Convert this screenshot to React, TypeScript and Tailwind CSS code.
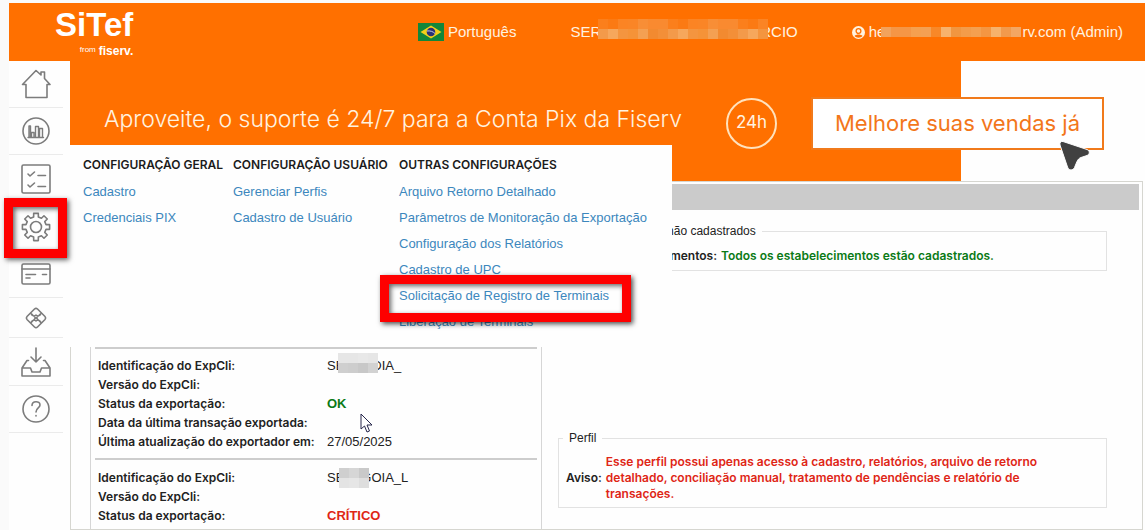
import React from "react";

type Tone = "ok" | "critical";

const ORANGE_LIGHT = ["#fb7f1c", "#f98a30", "#fa8526", "#fb7a14", "#f98a30", "#f88e36", "#fb8424"];
const ORANGE_DARK = ["#f4953f", "#f39a4a", "#f28a30", "#f59338", "#f6a75c", "#f38f38", "#f4a052"];

const HEADER_MOSAIC = [
    Array.from({ length: 17 }, (_, i) => ORANGE_LIGHT[(i * 3) % 7]),
    Array.from({ length: 17 }, (_, i) => ORANGE_DARK[(i * 3 + 1) % 7]),
];

const EMAIL_MOSAIC = [
    ["#f2a25c", "#f59646", "#f59646", "#f5a04f", "#f4a053", "#f88828", "#f7b26c", "#f19640", "#f39c4a", "#f4a050", "#f49642", "#f6b26c", "#f29a4c", "#f3a764"],
];

const menu = [
    { title: "CONFIGURAÇÃO GERAL", width: "w-[150px]", items: ["Cadastro", "Credenciais PIX"] },
    { title: "CONFIGURAÇÃO USUÁRIO", width: "w-[166px]", items: ["Gerenciar Perfis", "Cadastro de Usuário"] },
    {
        title: "OUTRAS CONFIGURAÇÕES",
        width: "flex-1",
        items: [
            "Arquivo Retorno Detalhado",
            "Parâmetros de Monitoração da Exportação",
            "Configuração dos Relatórios",
            "Cadastro de UPC",
            "Solicitação de Registro de Terminais",
            "Liberação de Terminais",
        ],
    },
];

const Mosaic = ({ rows, className = "" }: { rows: string[][]; className?: string }) => (
    <span className={`relative z-10 inline-flex flex-col ${className}`} aria-hidden="true">
        {rows.map((row, r) => (
            <span key={r} className="flex">
                {row.map((color, c) => (
                    <span key={c} className="size-[10px]" style={{ backgroundColor: color }} />
                ))}
            </span>
        ))}
    </span>
);

const Icon = ({ children }: { children: React.ReactNode }) => (
    <svg width="30" height="30" viewBox="0 0 30 30" fill="none" stroke="#7c7c7c" strokeWidth="1.6" strokeLinejoin="round" strokeLinecap="round">
        {children}
    </svg>
);

const HomeIcon = () => (
    <Icon>
        <path d="M5 15.500H1.500L15 1.500l5 4.500V3h3.500v6.500l5.500 6H26V28.500H5z" />
    </Icon>
);

const ChartIcon = () => (
    <Icon>
        <circle cx="15" cy="15" r="13" />
        <path d="M7 21.500h15.500M8 21V10h1.500v11M10.500 21v-4.500H13V21M14.500 21V10.500h3V21M18.500 21v-8.500h3V21" strokeWidth="1.400" />
    </Icon>
);

const ChecklistIcon = () => (
    <Icon>
        <rect x="1" y="1" width="28" height="28" rx="1.500" />
        <path d="M7 10l2 2 4.500-4M17 11.500h7.500M7 21l2 2 4.500-4M17 22.500h7.500" />
    </Icon>
);

const teeth = () => {
    // outline of an eight-tooth cog, two radii per tooth
    const pts: string[] = [];
    for (let i = 0; i < 8; i++) {
        const a = (i * Math.PI) / 4;
        [[-0.23, 10.3], [-0.17, 13.8], [0.17, 13.8], [0.23, 10.3]].forEach(([d, r]) => {
            pts.push(`${(15 + r * Math.sin(a + d)).toFixed(2)},${(15 - r * Math.cos(a + d)).toFixed(2)}`);
        });
    }
    return pts.join(" ");
};

const GearIcon = () => (
    <Icon>
        <polygon points={teeth()} />
        <circle cx="15" cy="15" r="5.500" />
    </Icon>
);

const CardIcon = () => (
    <Icon>
        <rect x="1" y="5" width="28" height="20" rx="1.500" />
        <path d="M1 10h28M5 15.500h9.500M5 19h4M21.500 15.500h4" />
    </Icon>
);

const PixIcon = () => (
    <Icon>
        <path d="M13.500 6q1.500-1.300 3 0l7.500 7.500q1.300 1.500 0 3L16.500 24q-1.500 1.300-3 0L6 16.500q-1.300-1.500 0-3z" />
        <path d="M9.500 10.500c2.500 0 3.500 4.500 5.500 4.500s3-4.500 5.500-4.500M9.500 19.500c2.500 0 3.500-4.500 5.500-4.500s3 4.500 5.500 4.500M10 10.500c1 3 3.500 3 5 1.500 1.500 1.500 4 1.500 5-1.500M10 19.500c1-3 3.500-3 5-1.500 1.500-1.500 4-1.500 5 1.500" strokeWidth="1.300" />
    </Icon>
);

const InboxIcon = () => (
    <Icon>
        <path d="M15 1v14M10 10l5 5 5-5" />
        <path d="M7.500 13.500H6L1 21v8h28v-8l-5-7.500h-1.500M1 21h8.500l1.500 4h8l1.500-4H29" />
    </Icon>
);

const HelpIcon = () => (
    <Icon>
        <circle cx="15" cy="15" r="13" />
        <path d="M11 11.500c0-5 8-5 8-.5 0 3-4 3-4 7M15 21.500v.500" />
    </Icon>
);

const sidebar = [
    { label: "Início", icon: <HomeIcon />, height: "h-[47px]" },
    { label: "Gráficos", icon: <ChartIcon />, height: "h-[47px]" },
    { label: "Relatórios", icon: <ChecklistIcon />, height: "h-[48px]" },
    { label: "Configurações", icon: <GearIcon />, height: "h-[48px]", marked: true },
    { label: "Cartões", icon: <CardIcon />, height: "h-[47px]" },
    { label: "Pix", icon: <PixIcon />, height: "h-[40px]" },
    { label: "Downloads", icon: <InboxIcon />, height: "h-[48px]" },
    { label: "Ajuda", icon: <HelpIcon />, height: "h-[47px]" },
];

const Flag = () => (
    <svg width="26" height="18" viewBox="0 0 26 18" className="mr-[4px]">
        <rect width="26" height="18" fill="#12863a" />
        <path d="M13 2.500L23.500 9 13 15.500 2.500 9z" fill="#f3cf1c" />
        <circle cx="13" cy="9" r="4.300" fill="#2c3175" />
        <path d="M9 8c3-.5 6 .5 8 2.500" stroke="#c5cbe6" fill="none" />
    </svg>
);

const Header = () => (
    <header className="flex h-[58px] items-start bg-[#ff7000] pr-[22px] pl-[46px] text-white">
        <div className="flex flex-col items-end pt-[5px]">
            <span className="text-[33px] leading-[33px] font-bold">SiTef</span>
            <span className="flex items-start gap-[3px] leading-[20px]">
                <span className="text-[8px] leading-[17px]">from</span>
                <span className="text-[12px] font-bold">fiserv.</span>
            </span>
        </div>
        <div className="flex flex-1 items-center justify-end gap-[54px] pt-[16px] text-[15px] leading-[20px] text-[#fff3e0]">
            <button type="button" className="flex items-center">
                <Flag />
                Português
            </button>
            <span className="flex items-center">
                SER
                <Mosaic rows={HEADER_MOSAIC} className="mr-[-8px] mb-[6px] ml-[-3px]" />
                RCIO
            </span>
            <button type="button" className="flex items-center">
                <svg width="13" height="13" viewBox="0 0 13 13" className="mr-[4px]">
                    <circle cx="6.500" cy="6.500" r="6.500" fill="#fff3e0" />
                    <circle cx="6.500" cy="5" r="2.400" fill="none" stroke="#ff7000" strokeWidth="1.300" />
                    <path d="M2.500 10c1.500-2 6.500-2 8 0-2 2.200-6 2.200-8 0z" fill="#ff7000" />
                </svg>
                he
                <Mosaic rows={EMAIL_MOSAIC} className="mr-px ml-[-4px]" />
                rv.com (Admin)
            </button>
        </div>
    </header>
);

const Sidebar = () => (
    <nav className="mr-[7px] w-[54px] shrink-0 bg-[#fefefe]">
        {sidebar.map((item) => (
            <div key={item.label} className={`relative border-b border-[#ebebeb] ${item.height}`}>
                <button type="button" aria-label={item.label} className="flex size-full items-center justify-center">
                    {item.icon}
                </button>
                {item.marked && (
                    <span className="pointer-events-none absolute -top-[5px] -left-[5px] z-20 h-[60px] w-[63px] border-[9px] border-[#fe0000] shadow-[2px_2px_5px_rgba(0,0,0,0.6),inset_2px_2px_5px_rgba(0,0,0,0.6)]" />
                )}
            </div>
        ))}
    </nav>
);

const Banner = () => (
    <section className="flex h-[120px] items-center gap-[34px] bg-[linear-gradient(to_right,#ff7000_82.9%,#fefefe_82.9%)] pt-[4px] pr-[41px] pl-[34px] font-['Inter','Liberation_Sans',sans-serif]">
        <p className="flex-1 pb-[8px] text-[23px] leading-[30px] font-light whitespace-nowrap text-[#fff3e0]">
            Aproveite, o suporte é 24/7 para a Conta Pix da Fiserv
        </p>
        <span className="flex size-[51px] shrink-0 items-center justify-center rounded-full border-2 border-[#ffe2bd] text-[17px] text-[#fff3e0]">
            24h
        </span>
        <a href="#vendas" className="relative flex h-[53px] w-[293px] shrink-0 items-center justify-center border-2 border-[#f17a1b] bg-white text-[22px] whitespace-nowrap text-[#f3761a]">
            Melhore suas vendas já
            <svg width="34" height="34" viewBox="0 0 34 34" className="absolute top-[40px] right-[10px]">
                <path d="M5 2.500l24 8c3 1 3 5 0 6l-6 2c-2 .7-3 2-4 4l-2.500 6c-1.500 3.500-6 3-7-.5L2 6C1.500 3.500 3 2 5 2.500z" fill="#414141" stroke="#fff" />
            </svg>
        </a>
    </section>
);

const SettingsMenu = () => (
    <div className="absolute top-[84px] left-0 z-10 flex w-[602px] bg-[#fefefe] pt-[6px] pb-[12px] pl-[13px]">
        {menu.map((col) => (
            <div key={col.title} className={col.width}>
                <h2 className="font-['Inter','Liberation_Sans',sans-serif] text-[12px] leading-[28px] font-semibold whitespace-nowrap text-[#1b1b1b]">{col.title}</h2>
                <ul className="text-[13px] leading-[26px] text-[#3c87bd]">
                    {col.items.map((item) => (
                        <li key={item} className="relative whitespace-nowrap">
                            <a href="#menu">{item}</a>
                            {item.startsWith("Solicitação") && (
                                <span className="pointer-events-none absolute -top-[8px] -left-[19px] z-10 h-[47px] w-[251px] border-[9px] border-[#fe0000] shadow-[2px_2px_5px_rgba(0,0,0,0.7),inset_2px_2px_5px_rgba(0,0,0,0.6)]" />
                            )}
                        </li>
                    ))}
                </ul>
            </div>
        ))}
    </div>
);

const Row = ({ label, children }: { label: string; children?: React.ReactNode }) => (
    <tr className="h-[19px]">
        <th scope="row" className="w-[229px] p-0 text-left font-['Inter','Liberation_Sans',sans-serif] text-[12px] font-semibold whitespace-nowrap">{label}</th>
        <td className="p-0">{children}</td>
    </tr>
);

const Status = ({ tone, children }: { tone: Tone; children: string }) => (
    <span className={tone === "ok" ? "font-bold text-[#0a7a16]" : "font-bold text-[#df2616]"}>{children}</span>
);

const Exports = () => (
    <div className="w-[452px] shrink-0 border-x border-[#d6d6d6] px-[4px] pt-[137px] text-[13px] leading-[19px] text-[#222]">
        <div className="border-t-2 border-[#cdcdcd] pt-[7px] pb-[7px] pl-[3px]">
            <table className="w-full border-collapse">
                <tbody>
                    <Row label="Identificação do ExpCli:">
                        <span className="flex h-[19px] items-center">
                            SE
                            <Mosaic rows={[["#e6e6e6", "#e6e6e6", "#e8e8e8", "#e6e6e6"], ["#cfcfcf", "#cdcdcd", "#c8c8c8", "#d2d2d2"]]} className="mr-[-6px] mb-[5px] ml-[-6px]" />
                            DIA_
                        </span>
                    </Row>
                    <Row label="Versão do ExpCli:" />
                    <Row label="Status da exportação:"><Status tone="ok">OK</Status></Row>
                    <Row label="Data da última transação exportada:" />
                    <Row label="Última atualização do exportador em:">27/05/2025</Row>
                </tbody>
            </table>
        </div>
        <div className="border-t-2 border-[#cdcdcd] pt-[8px] pl-[3px]">
            <table className="w-full border-collapse">
                <tbody>
                    <Row label="Identificação do ExpCli:">
                        <span className="flex h-[19px] items-center">
                            SE
                            <Mosaic rows={[["#cfcfcf", "#d6d6d6", "#c9c9c9"], ["#e4e4e4", "#e6e6e6", "#dedede"]]} className="mr-[-8px] ml-[-5px]" />
                            GOIA_L
                        </span>
                    </Row>
                    <Row label="Versão do ExpCli:" />
                    <Row label="Status da exportação:"><Status tone="critical">CRÍTICO</Status></Row>
                </tbody>
            </table>
        </div>
    </div>
);

const Notices = () => (
    <div className="flex-1 pt-[14px] pr-[32px] pl-[16px] font-['Inter','Liberation_Sans',sans-serif] text-[12px] text-[#222]">
        <fieldset className="border border-[#e2e2e2] px-[7px] pb-[5px]">
            <legend className="ml-[-3px] px-[6px] font-['Liberation_Sans',Arial,sans-serif] leading-[14px]">Estabelecimentos não cadastrados</legend>
            <div className="flex gap-[4px] pt-[9px] leading-[18px] font-semibold">
                <span className="flex w-[151px] justify-end whitespace-nowrap">Status estabelecimentos:</span>
                <span className="text-[#0a7a16]">Todos os estabelecimentos estão cadastrados.</span>
            </div>
        </fieldset>
        <fieldset className="mt-[160px] border border-[#e2e2e2] px-[7px] pb-[5px]">
            <legend className="ml-[-3px] px-[6px] font-['Liberation_Sans',Arial,sans-serif] leading-[14px]">Perfil</legend>
            <div className="flex items-center gap-[4px] pt-[9px] leading-[16px] font-semibold">
                <span>Aviso:</span>
                <p className="max-w-[460px] text-[#df2616]">
                    Esse perfil possui apenas acesso à cadastro, relatórios, arquivo de retorno detalhado, conciliação manual, tratamento de pendências e relatório de transações.
                </p>
            </div>
        </fieldset>
    </div>
);

const Pointer = () => (
    <svg width="14" height="21" viewBox="0 0 14 21" className="absolute top-[352px] left-[290px]">
        <path d="M1 1v15l3.500-3 2.500 6 2.500-1-2.500-6H12z" fill="#fff" stroke="#26264a" />
    </svg>
);

const App: React.FC = () => {
    return (
        <div className="flex min-h-screen flex-col bg-[#fafafa] pt-[3px] pl-[9px] font-['Liberation_Sans',Arial,sans-serif]">
            <Header />
            <div className="flex flex-1 bg-[#fefefe]">
                <Sidebar />
                <main className="relative flex min-w-0 flex-1 flex-col">
                    <Banner />
                    <SettingsMenu />
                    <section className="mr-[2px] flex flex-1 flex-col border border-[#d6d6d0] px-[3px] pt-[2px]">
                        <div className="h-[26px] bg-[#cbcbcb]" />
                        <div className="flex flex-1 pl-[16px]">
                            <Exports />
                            <Notices />
                        </div>
                    </section>
                    <Pointer />
                </main>
            </div>
        </div>
    );
};

export default App;
